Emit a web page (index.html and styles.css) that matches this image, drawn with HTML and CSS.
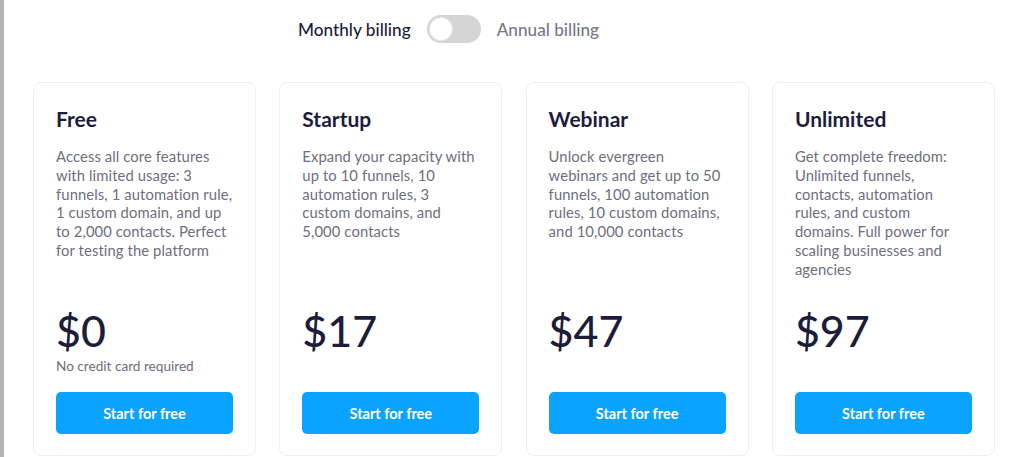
FILE: index.html
```html
<!DOCTYPE html>
<html lang="en">
<head>
  <meta charset="UTF-8">
  <meta name="viewport" content="width=device-width, initial-scale=1.0">
  <title>Pricing</title>
  <link rel="stylesheet" href="styles.css">
</head>
<body>

  <div class="page">
    <div class="billing">
      <span class="billing-label active">Monthly billing</span>
      <label class="switch">
        <input type="checkbox" id="billingToggle">
        <span class="slider"></span>
      </label>
      <span class="billing-label">Annual billing</span>
    </div>

    <div class="plans">
      <div class="plan">
        <h2>Free</h2>
        <p class="plan-desc">Access all core features with limited usage: 3 funnels, 1 automation rule, 1 custom domain, and up to 2,000 contacts. Perfect for testing the platform</p>
        <div class="price">$0</div>
        <div class="price-note">No credit card required</div>
        <button type="button" class="plan-btn">Start for free</button>
      </div>

      <div class="plan">
        <h2>Startup</h2>
        <p class="plan-desc">Expand your capacity with up to 10 funnels, 10 automation rules, 3<br>custom domains, and 5,000 contacts</p>
        <div class="price">$17</div>
        <div class="price-note"></div>
        <button type="button" class="plan-btn">Start for free</button>
      </div>

      <div class="plan">
        <h2>Webinar</h2>
        <p class="plan-desc">Unlock evergreen<br>webinars and get up to 50 funnels, 100 automation rules, 10 custom domains, and 10,000 contacts</p>
        <div class="price">$47</div>
        <div class="price-note"></div>
        <button type="button" class="plan-btn">Start for free</button>
      </div>

      <div class="plan">
        <h2>Unlimited</h2>
        <p class="plan-desc">Get complete freedom: Unlimited funnels, contacts, automation rules, and custom domains. Full power for scaling businesses and agencies</p>
        <div class="price">$97</div>
        <div class="price-note"></div>
        <button type="button" class="plan-btn">Start for free</button>
      </div>
    </div>
  </div>

</body>
</html>
```

FILE: styles.css
```css
body {
  font-family: 'Lato', 'Liberation Sans', sans-serif;
  background-color: #fff;
  color: #1d1d3b;
  margin: 0;
  overflow: hidden;
}
.page {
  border-left: 4px solid #b5b5b5;
  height: 457px;
  box-sizing: border-box;
}
.billing {
  display: flex;
  align-items: center;
  gap: 16px;
  padding: 15px 0 0 294px;
  height: 28px;
}
.billing-label {
  font-size: 17.2px;
  font-weight: 500;
  color: #77778a;
}
.billing-label.active {
  color: #1d1d3b;
}
.switch {
  position: relative;
  display: inline-block;
  width: 54px;
  height: 28px;
}
.switch input {
  opacity: 0;
  width: 0;
  height: 0;
}
.slider {
  position: absolute;
  inset: 0;
  background-color: #d5d5d5;
  border-radius: 14px;
  cursor: pointer;
}
.slider::before {
  content: "";
  position: absolute;
  left: 3px;
  top: 3px;
  width: 22px;
  height: 22px;
  border-radius: 50%;
  background-color: #fff;
  box-shadow: 0 0 0 1px #e4e4e4;
}
.plans {
  display: grid;
  grid-template-columns: repeat(4, 223px);
  column-gap: 23.3px;
  padding: 39px 0 0 29px;
}
.plan {
  display: flex;
  flex-direction: column;
  height: 374px;
  box-sizing: border-box;
  padding: 24px 22px 21px;
  border: 1px solid #efeff1;
  border-radius: 8px;
}
.plan h2 {
  margin: 0;
  font-size: 21px;
  line-height: 24px;
  font-weight: 700;
  color: #1d1d3b;
}
.plan-desc {
  flex: 1;
  margin: 16px 0 0;
  font-size: 14.8px;
  line-height: 18.8px;
  letter-spacing: 0.1px;
  color: #6e6e7e;
}
.price {
  font-size: 43px;
  line-height: 44px;
  font-weight: 500;
  color: #1d1d3b;
}
.price-note {
  height: 18px;
  margin-top: 4px;
  font-size: 13.6px;
  line-height: 18px;
  color: #6e6e7e;
}
.plan-btn {
  margin-top: 17px;
  height: 42px;
  width: 100%;
  border: none;
  border-radius: 5px;
  background-color: #0aa3ff;
  color: #fff;
  font-family: inherit;
  font-size: 14.5px;
  font-weight: 700;
  cursor: pointer;
}
.plan-btn:hover {
  background-color: #0090e6;
}
```
